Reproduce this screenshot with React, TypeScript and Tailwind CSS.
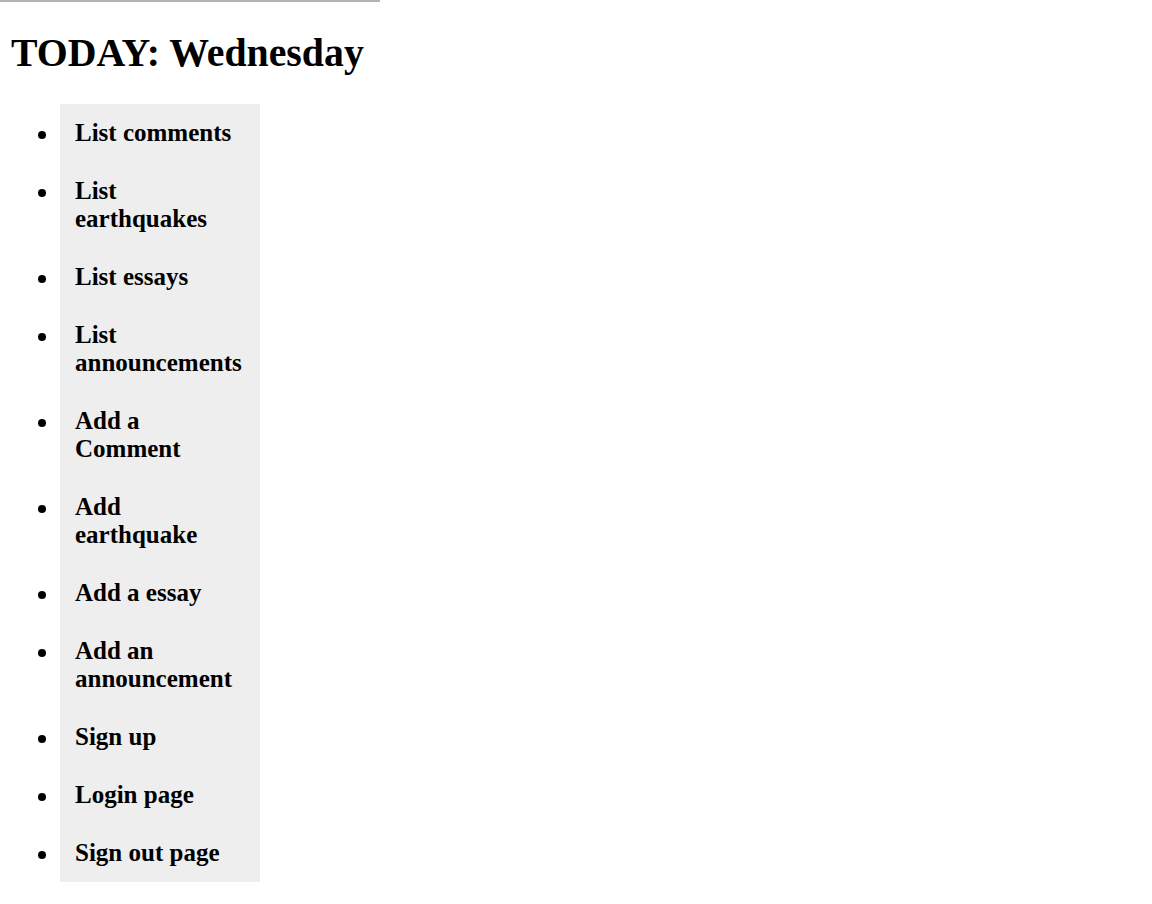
const links = [
  'List comments',
  'List earthquakes',
  'List essays',
  'List announcements',
  'Add a Comment',
  'Add earthquake',
  'Add a essay',
  'Add an announcement',
  'Sign up',
  'Login page',
  'Sign out page',
]

export default function App() {
  return (
    <div className="min-h-screen bg-white text-black" style={{ fontFamily: '"Liberation Serif", "Times New Roman", serif' }}>
      <div className="w-[380px] border-t-2 border-[#b3b3b3]" />
      <h1 className="mt-[29px] pl-[11px] text-[39.8px] leading-[44px] font-bold">TODAY: Wednesday</h1>
      <ul className="mt-[29px] ml-[60px] w-[200px] bg-[#eeeeee] px-[15px] py-[15px] flex flex-col gap-[30px]">
        {links.map((l) => (
          <li key={l} className="relative text-[25px] leading-[28px] font-bold">
            <span className="absolute -left-[37px] top-[12px] h-2 w-2 rounded-full bg-black" />
            <a href="#">{l}</a>
          </li>
        ))}
      </ul>
    </div>
  )
}
